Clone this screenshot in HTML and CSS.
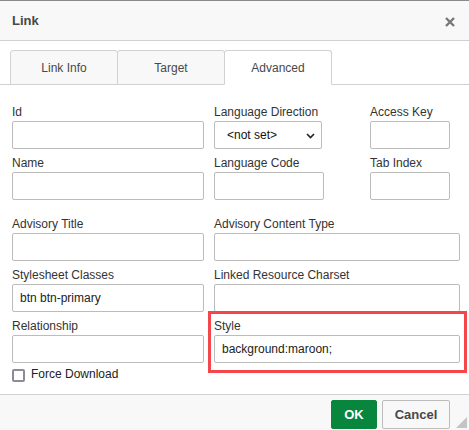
FILE: index.html
```html
<!DOCTYPE html>
<html>
<head>
<meta charset="utf-8">
<link rel="stylesheet" href="styles.css">
</head>
<body>
<div class="dialog">
  <div class="titlebar">
    <span class="title">Link</span>
    <svg class="close" width="10" height="10" viewBox="0 0 10 10"><path d="M1 1 L9 9 M9 1 L1 9" stroke="#777" stroke-width="2.4" fill="none"/></svg>
  </div>
  <div class="tabs">
    <div class="tab">Link Info</div>
    <div class="tab">Target</div>
    <div class="tab active">Advanced</div>
  </div>
  <div class="content">
    <div class="grid3">
      <div class="field"><div class="label">Id</div><div class="input"></div></div>
      <div class="field"><div class="label">Language Direction</div>
        <div class="select"><span>&lt;not set&gt;</span>
          <svg width="9" height="6" viewBox="0 0 9 6"><path d="M1 1 L4.5 4.5 L8 1" stroke="#222" stroke-width="1.6" fill="none"/></svg>
        </div>
      </div>
      <div class="field"><div class="label">Access Key</div><div class="input"></div></div>
      <div class="field"><div class="label">Name</div><div class="input"></div></div>
      <div class="field"><div class="label">Language Code</div><div class="input code"></div></div>
      <div class="field"><div class="label">Tab Index</div><div class="input"></div></div>
    </div>
    <div class="grid2">
      <div class="field"><div class="label">Advisory Title</div><div class="input"></div></div>
      <div class="field"><div class="label">Advisory Content Type</div><div class="input"></div></div>
      <div class="field"><div class="label">Stylesheet Classes</div><div class="input">btn btn-primary</div></div>
      <div class="field"><div class="label">Linked Resource Charset</div><div class="input"></div></div>
      <div class="field"><div class="label">Relationship</div><div class="input"></div></div>
      <div class="field highlight"><div class="label">Style</div><div class="input">background:maroon;</div></div>
    </div>
    <div class="check"><span class="box"></span><span>Force Download</span></div>
  </div>
  <div class="footer">
    <button class="btn ok">OK</button>
    <button class="btn cancel">Cancel</button>
    <span class="grip"></span>
  </div>
</div>
</body>
</html>
```
FILE: styles.css
```css
* { box-sizing: border-box; }
html, body { margin: 0; padding: 0; background: #fff; }
body { font-family: Arial, "Liberation Sans", sans-serif; font-size: 12px; color: #333; }

.dialog {
  width: 469px;
  height: 430px;
  border-top: 1px solid #8a8a8a;
  display: flex;
  flex-direction: column;
  background: #fff;
}

.titlebar {
  height: 40px;
  background: #f8f8f8;
  border-bottom: 1px solid #d1d1d1;
  display: flex;
  align-items: center;
  justify-content: space-between;
  padding: 0 14px 0 12px;
}
.title { font-weight: bold; font-size: 13px; color: #484848; }
.close { display: block; margin-top: 2px; }

.tabs {
  margin-top: 9px;
  padding-left: 10px;
  display: flex;
  border-bottom: 1px solid #d1d1d1;
  height: 35px;
}
.tab {
  width: 108px;
  height: 35px;
  margin-right: -1px;
  margin-bottom: -1px;
  border: 1px solid #d1d1d1;
  border-radius: 3px 3px 0 0;
  background: #f8f8f8;
  color: #484848;
  display: flex;
  align-items: center;
  justify-content: center;
  font-size: 12px;
}
.tab.active { background: #fff; border-bottom-color: #fff; }

.content {
  flex: 1;
  padding: 20px 0 0 12px;
}

.grid3 {
  display: grid;
  grid-template-columns: 192px 146px 80px;
  column-gap: 10px;
  row-gap: 7px;
}
.grid2 {
  margin-top: 17px;
  display: grid;
  grid-template-columns: 192px 246px;
  column-gap: 10px;
  row-gap: 7px;
}

.field { position: relative; }
.label { line-height: 14px; height: 14px; margin-bottom: 2px; color: #333; white-space: nowrap; }
.input {
  height: 28px;
  border: 1px solid #bcbcbc;
  border-radius: 2px;
  background: #fff;
  padding: 0 7px;
  line-height: 26px;
  color: #222;
}
.input.code { width: 110px; }
.select {
  width: 108px;
  height: 28px;
  border: 1px solid #bcbcbc;
  border-radius: 2px;
  display: flex;
  align-items: center;
  justify-content: space-between;
  padding: 0 6px 0 12px;
  color: #111;
  font-size: 12px;
}
.select svg { display: block; margin-top: 1px; }

.highlight::after {
  content: "";
  position: absolute;
  left: -6px;
  top: -8px;
  right: -7px;
  bottom: -10px;
  border: 3px solid #f5464b;
}

.check {
  margin-top: 4px;
  display: flex;
  align-items: flex-start;
  line-height: 14px;
  color: #222;
}
.check .box {
  width: 13px;
  height: 13px;
  margin-top: 2px;
  margin-right: 6px;
  border: 2px solid #8c8c96;
  border-radius: 2px;
  background: #fff;
}

.footer {
  position: relative;
  height: 36px;
  border-top: 1px solid #d1d1d1;
  background: #f8f8f8;
  display: flex;
  justify-content: flex-end;
  align-items: flex-start;
  padding: 5px 19px 0 0;
  gap: 5px;
}
.btn {
  height: 29px;
  font-family: Arial, "Liberation Sans", sans-serif;
  font-weight: bold;
  font-size: 13px;
  border-radius: 2px;
  padding: 0;
  margin: 0;
}
.ok { width: 46px; background: #09863e; color: #fff; border: 1px solid #09863e; }
.cancel { width: 68px; background: #f8f8f8; color: #484848; border: 1px solid #bcbcbc; }
.grip {
  position: absolute;
  right: 2px;
  bottom: 2px;
  width: 0;
  height: 0;
  border-left: 11px solid transparent;
  border-bottom: 11px solid #c4c4c4;
}
```
